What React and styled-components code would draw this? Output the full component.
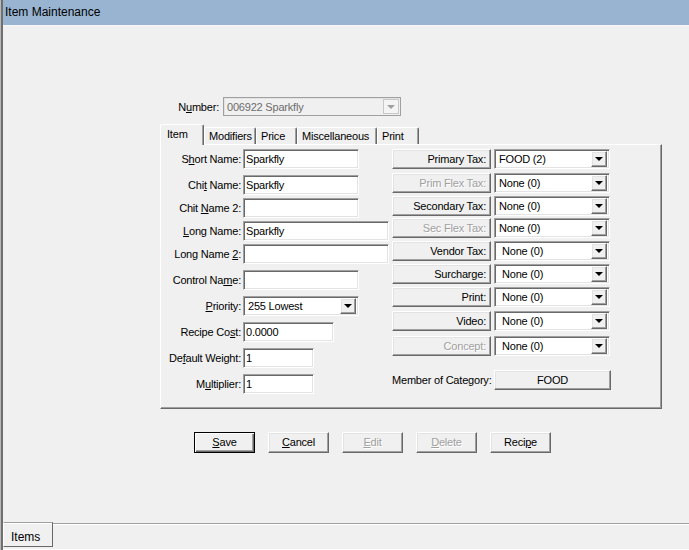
import React from 'react';
import styled, { createGlobalStyle, css } from 'styled-components';

const GlobalStyle = createGlobalStyle`
  html, body { margin: 0; padding: 0; background: #f0f0f0; }
  body {
    font-family: "Liberation Sans", Arial, sans-serif;
    font-size: 11px;
    letter-spacing: -0.2px;
    color: #000;
  }
  #root { width: 689px; height: 550px; overflow: hidden; }
  * { box-sizing: border-box; }
`;

// classic windows bevels
const sunken = css`
  border: 1px solid;
  border-color: #a0a0a0 #fff #fff #a0a0a0;
  box-shadow: inset 1px 1px 0 #696969, inset -1px -1px 0 #e3e3e3;
`;

const raised = css`
  border: 1px solid;
  border-color: #fff #696969 #696969 #fff;
  box-shadow: inset -1px -1px 0 #a0a0a0, inset 1px 1px 0 #e3e3e3;
`;

const disabledText = css`
  color: #a0a0a0;
  text-shadow: 1px 1px 0 #fff;
`;

const Window = styled.div`
  width: 689px;
  height: 550px;
  padding-left: 3px;
  display: flex;
  flex-direction: column;
  background: #f0f0f0;
  box-shadow: inset 1px 0 0 #b9b9b9, inset 3px 0 0 #6f6f6f;
`;

const TitleBar = styled.div`
  height: 26px;
  background: #99b4d1;
  border-bottom: 1px solid #f7f7f7;
  padding-left: 2px;
  font-size: 12px;
  letter-spacing: 0;
  line-height: 25px;
`;

const Main = styled.div`
  flex: 1;
  display: flex;
  flex-direction: column;
  padding-left: 157px;
`;

const Form = styled.div`
  width: 502px;
  margin-top: 71px;
  display: flex;
  flex-direction: column;
`;

const NumberRow = styled.div`
  display: flex;
  align-items: center;
  height: 19px;
  gap: 4px;
`;

const NumberLabel = styled.span`
  width: 59px;
  text-align: right;
  white-space: nowrap;
`;

const Combo = styled.div`
  width: 178px;
  height: 19px;
  border: 1px solid #a0a0a0;
  box-shadow: inset 1px 1px 0 #e3e3e3;
  background: #f0f0f0;
  color: #6d6d6d;
  display: flex;
  align-items: center;
  padding: 1px 1px 1px 3px;
`;

const ComboText = styled.span`
  flex: 1;
`;

const ComboArrow = styled.span`
  width: 16px;
  height: 15px;
  border: 1px solid #c8c8c8;
  background: #f4f4f4;
  display: flex;
  align-items: center;
  justify-content: center;
`;

const Triangle = styled.span`
  width: 0;
  height: 0;
  border-left: 4px solid transparent;
  border-right: 4px solid transparent;
  border-top: 4px solid ${p => p.$color || '#000'};
`;

const TabStrip = styled.div`
  margin-top: 8px;
  height: 20px;
  display: flex;
  align-items: flex-end;
  position: relative;
  z-index: 1;
`;

const Tab = styled.div`
  width: ${p => p.$w}px;
  height: ${p => (p.$active ? 21 : 17)}px;
  margin-bottom: ${p => (p.$active ? -1 : 0)}px;
  background: #f0f0f0;
  border-top: 1px solid #fff;
  border-left: 1px solid #fff;
  border-right: 1px solid #696969;
  box-shadow: inset -1px 0 0 #a0a0a0;
  border-radius: 2px 2px 0 0;
  padding-left: ${p => (p.$active ? 6 : 4)}px;
  padding-top: ${p => (p.$active ? 3 : 2)}px;
  white-space: nowrap;
`;

const Panel = styled.div`
  height: 265px;
  width: 502px;
  border-top: 1px solid #fff;
  border-left: 1px solid #fff;
  border-right: 1px solid #696969;
  border-bottom: 1px solid #696969;
  box-shadow: inset -1px -1px 0 #a0a0a0;
  display: flex;
`;

const LeftCol = styled.div`
  width: 231px;
  display: flex;
  flex-direction: column;
`;

const RightCol = styled.div`
  display: flex;
  flex-direction: column;
`;

const Field = styled.div`
  display: flex;
  align-items: center;
  height: 20px;
  margin-top: ${p => p.$mt}px;
`;

const FieldLabel = styled.span`
  width: 80px;
  margin-right: 2px;
  text-align: right;
  white-space: nowrap;
`;

const TextBox = styled.div`
  ${sunken};
  width: ${p => p.$w}px;
  height: 20px;
  background: #fff;
  padding-left: 2px;
  display: flex;
  align-items: center;
`;

const SelectBox = styled.div`
  ${sunken};
  width: ${p => p.$w}px;
  height: 20px;
  background: #fff;
  padding: 2px;
  display: flex;
  align-items: center;
`;

const SelectText = styled.span`
  flex: 1;
  padding-left: ${p => p.$indent || 2}px;
`;

const DropButton = styled.span`
  ${raised};
  width: 16px;
  height: 16px;
  background: #f0f0f0;
  display: flex;
  align-items: center;
  justify-content: center;
`;

const TaxRow = styled.div`
  display: flex;
  align-items: center;
  gap: 3px;
  height: 20px;
  margin-top: ${p => p.$mt}px;
`;

const TaxButton = styled.div`
  ${raised};
  width: 99px;
  height: 20px;
  background: #f0f0f0;
  text-align: right;
  padding-right: 4px;
  line-height: 18px;
  white-space: nowrap;
  ${p => p.$disabled && disabledText};
`;

const CategoryRow = styled.div`
  display: flex;
  align-items: center;
  height: 20px;
  margin-top: 14px;
`;

const CategoryLabel = styled.span`
  width: 102px;
  white-space: nowrap;
`;

const CategoryButton = styled.div`
  ${raised};
  width: 117px;
  height: 20px;
  background: #f0f0f0;
  text-align: center;
  line-height: 18px;
`;

const ButtonRow = styled.div`
  margin-top: 23px;
  padding-left: 34px;
  display: flex;
  gap: 13px;
`;

const PushButton = styled.div`
  ${raised};
  width: 61px;
  height: 21px;
  background: #f0f0f0;
  text-align: center;
  line-height: 19px;
  ${p => p.$default && css`
    border-color: #000;
    box-shadow: inset 1px 1px 0 #fff, inset -1px -1px 0 #696969, inset -2px -2px 0 #a0a0a0;
  `}
  ${p => p.$disabled && disabledText};
`;

const BottomBar = styled.div`
  height: 28px;
  display: flex;
  align-items: flex-start;
  border-bottom: 1px solid #fff;
`;

const BottomTab = styled.div`
  width: 50px;
  height: 25px;
  border-top: 1px solid #a0a0a0;
  border-left: 1px solid #fff;
  border-right: 1px solid #696969;
  border-bottom: 1px solid #696969;
  box-shadow: inset 0 1px 0 #fff;
  padding: 7px 0 0 7px;
  font-size: 12px;
  letter-spacing: 0;
`;

const BottomFill = styled.div`
  flex: 1;
  margin-top: 1px;
  height: 2px;
  border-top: 1px solid #a0a0a0;
  background: #fff;
`;

const Arrow = () => (
  <DropButton>
    <Triangle />
  </DropButton>
);

const leftFields = [
  { label: <>S<u>h</u>ort Name:</>, value: 'Sparkfly', w: 116, mt: 4 },
  { label: <>Chi<u>t</u> Name:</>, value: 'Sparkfly', w: 116, mt: 6 },
  { label: <>Chit <u>N</u>ame 2:</>, value: '', w: 116, mt: 3 },
  { label: <><u>L</u>ong Name:</>, value: 'Sparkfly', w: 146, mt: 3 },
  { label: <>Long Name <u>2</u>:</>, value: '', w: 146, mt: 3 },
  { label: <>Control Na<u>m</u>e:</>, value: '', w: 116, mt: 6 },
  { label: <><u>P</u>riority:</>, value: '255 Lowest', w: 116, mt: 6, select: true },
  { label: <>Recipe Co<u>s</u>t:</>, value: '0.0000', w: 91, mt: 6 },
  { label: <>De<u>f</u>ault Weight:</>, value: '1', w: 71, mt: 6 },
  { label: <>M<u>u</u>ltiplier:</>, value: '1', w: 71, mt: 6 },
];

const taxRows = [
  { label: 'Primary Tax:', value: 'FOOD (2)', mt: 4 },
  { label: 'Prim Flex Tax:', value: 'None (0)', mt: 4, disabled: true },
  { label: 'Secondary Tax:', value: 'None (0)', mt: 3 },
  { label: 'Sec Flex Tax:', value: 'None (0)', mt: 2, disabled: true },
  { label: 'Vendor Tax:', value: 'None (0)', mt: 3, indent: 5 },
  { label: 'Surcharge:', value: 'None (0)', mt: 3, indent: 5 },
  { label: 'Print:', value: 'None (0)', mt: 3, indent: 5 },
  { label: 'Video:', value: 'None (0)', mt: 4, indent: 5 },
  { label: 'Concept:', value: 'None (0)', mt: 5, indent: 5, disabled: true },
];

const tabs = [
  { name: 'Item', w: 44, active: true },
  { name: 'Modifiers', w: 52 },
  { name: 'Price', w: 41 },
  { name: 'Miscellaneous', w: 80 },
  { name: 'Print', w: 42 },
];

const App = () => {
  return (
    <>
      <GlobalStyle />
      <Window>
        <TitleBar>Item Maintenance</TitleBar>
        <Main>
          <Form>
            <NumberRow>
              <NumberLabel>N<u>u</u>mber:</NumberLabel>
              <Combo>
                <ComboText>006922 Sparkfly</ComboText>
                <ComboArrow><Triangle $color="#a0a0a0" /></ComboArrow>
              </Combo>
            </NumberRow>

            <TabStrip>
              {tabs.map(t => (
                <Tab key={t.name} $w={t.w} $active={t.active}>{t.name}</Tab>
              ))}
            </TabStrip>

            <Panel>
              <LeftCol>
                {leftFields.map((f, i) => (
                  <Field key={i} $mt={f.mt}>
                    <FieldLabel>{f.label}</FieldLabel>
                    {f.select ? (
                      <SelectBox $w={f.w}>
                        <SelectText>{f.value}</SelectText>
                        <Arrow />
                      </SelectBox>
                    ) : (
                      <TextBox $w={f.w}>{f.value}</TextBox>
                    )}
                  </Field>
                ))}
              </LeftCol>

              <RightCol>
                {taxRows.map(r => (
                  <TaxRow key={r.label} $mt={r.mt}>
                    <TaxButton $disabled={r.disabled}>{r.label}</TaxButton>
                    <SelectBox $w={116}>
                      <SelectText $indent={r.indent}>{r.value}</SelectText>
                      <Arrow />
                    </SelectBox>
                  </TaxRow>
                ))}
                <CategoryRow>
                  <CategoryLabel>Member of Category:</CategoryLabel>
                  <CategoryButton>FOOD</CategoryButton>
                </CategoryRow>
              </RightCol>
            </Panel>

            <ButtonRow>
              <PushButton $default><u>S</u>ave</PushButton>
              <PushButton><u>C</u>ancel</PushButton>
              <PushButton $disabled><u>E</u>dit</PushButton>
              <PushButton $disabled><u>D</u>elete</PushButton>
              <PushButton>Reci<u>p</u>e</PushButton>
            </ButtonRow>
          </Form>
        </Main>

        <BottomBar>
          <BottomTab>Items</BottomTab>
          <BottomFill />
        </BottomBar>
      </Window>
    </>
  );
};

export default App;
